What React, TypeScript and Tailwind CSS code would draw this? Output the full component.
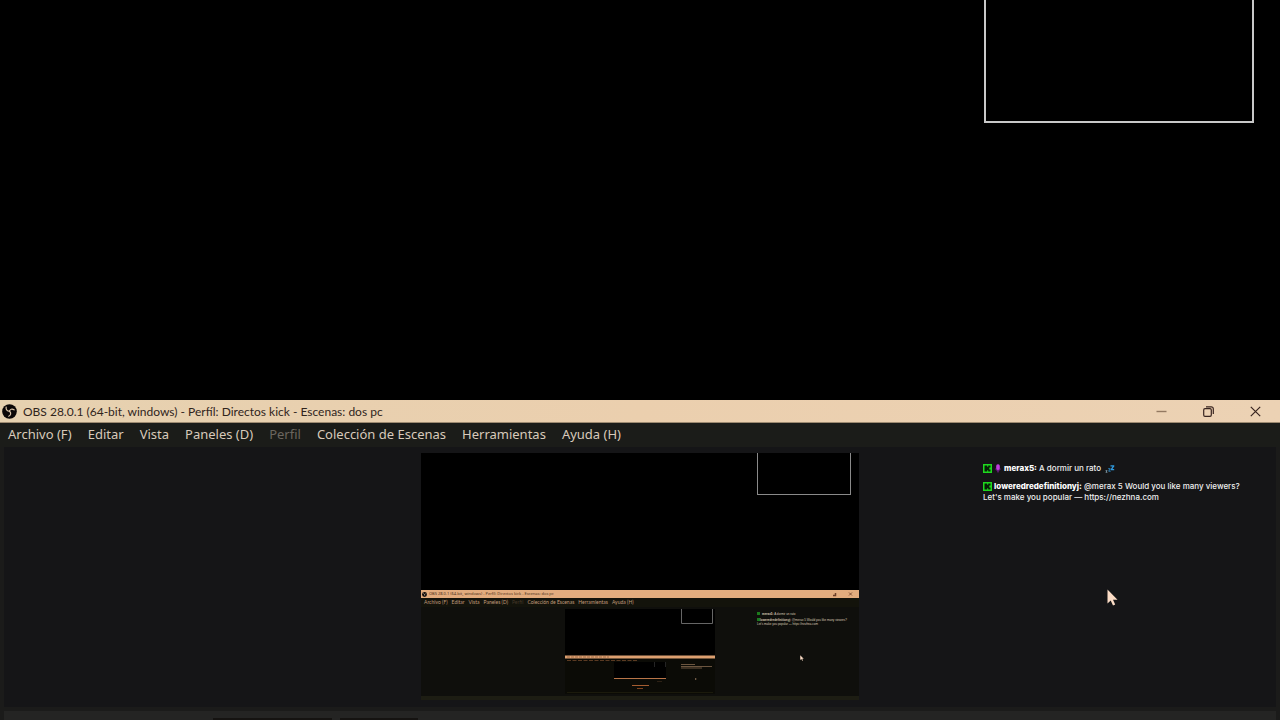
import type { ReactNode } from 'react'

const TITLE = 'OBS 28.0.1 (64-bit, windows) - Perfíl: Directos kick - Escenas: dos pc'

const MENU = [
  { label: 'Archivo (F)' },
  { label: 'Editar' },
  { label: 'Vista' },
  { label: 'Paneles (D)' },
  { label: 'Perfil', disabled: true },
  { label: 'Colección de Escenas' },
  { label: 'Herramientas' },
  { label: 'Ayuda (H)' },
]

function ObsLogo({ className }: { className: string }) {
  return (
    <svg viewBox="0 0 16 16" className={className} aria-hidden="true">
      <circle cx="8" cy="8" r="7.8" fill="#0b0707" />
      <g fill="none" stroke="#d9c3a8" strokeWidth="1.3" strokeLinecap="round">
        <path d="M4.4 3.2C4 6 5.6 7.6 8 7.7" />
        <path d="M12.9 6.2C10.6 4.6 8.5 5.6 8 7.7" />
        <path d="M7.2 13C9.6 12 10 9.6 8 7.7" />
      </g>
    </svg>
  )
}

function KickBadge() {
  return (
    <svg viewBox="0 0 9 9" className="mr-[2px] inline-block h-[9px] w-[9px] align-[-2px]" aria-label="Kick">
      <rect width="9" height="9" fill="#1fd81f" />
      <path d="M1.5 1.5h2.7v1.3h1v-1.3h2.3v2H6.3v2h1.200v2H5.2V6.200h-1v1.300H1.500z" fill="#062006" />
    </svg>
  )
}

function MicBadge() {
  return (
    <svg viewBox="0 0 6 9" className="mr-[3px] ml-px inline-block h-[9px] w-[6px] align-[-2px]" aria-hidden="true">
      <rect x="1.2" y="0.3" width="3.6" height="5.8" rx="1.7" fill="#c13be0" />
      <path d="M0.9 4.5c0 3 4.200 3 4.200 0M3 6.7V8.5" fill="none" stroke="#8a22a8" strokeWidth="0.9" />
    </svg>
  )
}

function SleepEmoji() {
  return (
    <svg viewBox="0 0 10 8" className="ml-1 inline-block h-2 w-[10px] align-[-2px]" aria-label="zzz">
      <g fill="none" strokeLinejoin="round">
        <path d="M5.5 0.9h3.3L6.2 4.6h3" stroke="#2f9be0" strokeWidth="1.3" />
        <path d="M3.2 3.7h2L3.7 6.2h2" stroke="#2b83bd" strokeWidth="1" />
        <path d="M0.6 5.6h1.5L0.9 7.3h1.5" stroke="#8ea9b8" strokeWidth="0.8" />
      </g>
    </svg>
  )
}

function Cursor({ className }: { className: string }) {
  return (
    <svg viewBox="0 0 11 17" className={className} aria-hidden="true">
      <path d="M0.5 0.5V14.5L3.7 11.5L6 16.5L8.2 15.5L6 10.7H10.5Z" fill="#fbdcc6" />
    </svg>
  )
}

function Chat() {
  return (
    <div className="font-['Inter',sans-serif] text-[8px] leading-[11px] font-medium text-[#efefef]">
      <p>
        <KickBadge />
        <MicBadge />
        <b className="font-extrabold text-white">merax5:</b> A dormir un rato
        <SleepEmoji />
      </p>
      <p className="mt-[7px]">
        <KickBadge />
        <b className="font-extrabold text-white">loweredredefinitionyj:</b> @merax 5 Would you like many viewers?
        <br />
        Let's make you popular — <a href="https://nezhna.com">https://nezhna.com</a>
      </p>
    </div>
  )
}

function TitleBar() {
  return (
    <header className="flex h-[23px] shrink-0 items-center border-b border-[#9d8a71] bg-gradient-to-r from-[#e6d1b0] via-[#ebcfae] to-[#ecd2b4] pr-px pl-[2px]">
      <ObsLogo className="h-[15px] w-[15px]" />
      <h1 className="ml-[6px] flex-1 pt-px font-['Lato',sans-serif] text-[12px] text-[#30241c]">{TITLE}</h1>
      <WindowButton label="Minimizar">
        <path d="M0.5 5.5h10" stroke="#937961" strokeWidth="1.4" />
      </WindowButton>
      <WindowButton label="Restaurar">
        <rect x="0.7" y="2.7" width="7.6" height="7.6" rx="1.3" />
        <path d="M3 0.8h5.3a2 2 0 0 1 2 2V8" />
      </WindowButton>
      <WindowButton label="Cerrar">
        <path d="M0.8 0.8l9.4 9.4M10.2 0.8L0.8 10.2" />
      </WindowButton>
    </header>
  )
}

function WindowButton({ label, children }: { label: string; children: ReactNode }) {
  return (
    <button aria-label={label} className="flex h-full w-[47px] items-center justify-center">
      <svg viewBox="0 0 11 11" className="h-[11px] w-[11px]" fill="none" stroke="#38241f" strokeWidth="1.2">
        {children}
      </svg>
    </button>
  )
}

function MenuBar() {
  return (
    <nav className="flex h-6 shrink-0 items-center gap-4 bg-[#1b1c19] pl-2 text-[13px] text-[#d8cabb]">
      {MENU.map((m) => (
        <button key={m.label} disabled={m.disabled} className="whitespace-nowrap disabled:text-[#6b665f]">
          {m.label}
        </button>
      ))}
    </nav>
  )
}

// the captures inside the capture, too small for anything but strokes
function DeepCapture() {
  return (
    <svg viewBox="0 0 150 85" className="h-[85px] w-[150px]" aria-hidden="true">
      <rect width="150" height="85" fill="#0b0b06" />
      <rect width="150" height="47" fill="#000" />
      <path d="M116.5 0v14.5h31V0" fill="none" stroke="#666" />
      <rect y="46.5" width="150" height="3" fill="#dc9f70" />
      <path d="M2 48h42" stroke="#a06c48" strokeWidth="1" strokeDasharray="3 1" />
      <path d="M2 51.5h70" stroke="#5a3a22" strokeWidth="1" strokeDasharray="4 1.5" />
      <rect x="49" y="53" width="52" height="16" fill="#000" />
      <path d="M89.5 53v5M100.5 53v5" stroke="#333" strokeWidth="0.7" />
      <path d="M49 69.5h52" stroke="#b87448" strokeWidth="1.2" />
      <path d="M116 55.5h14M116 57.5h31M116 59h21" stroke="#84684e" strokeWidth="0.8" />
      <circle cx="130.7" cy="70" r="0.7" fill="#bb9675" />
      <path d="M67 76.5h17" stroke="#a45c30" strokeWidth="1" />
      <path d="M72 79.5h6" stroke="#8d4a22" strokeWidth="0.9" />
      <path d="M92 72.5h5" stroke="#453020" strokeWidth="0.6" />
      <path d="M2 83.5h146" stroke="#1b1a0c" />
    </svg>
  )
}

function Preview() {
  return (
    <div className="flex h-[247px] flex-col bg-[#0f0f0c]">
      <div className="flex h-[137px] justify-end bg-black pr-2">
        <div className="h-[42px] w-[94px] border border-t-0 border-[#8a8a8a]" />
      </div>
      <div className="flex h-2 items-center bg-[#e2ac7e] pl-px">
        <ObsLogo className="h-[5px] w-[5px]" />
        <p className="ml-[2px] flex-1 text-[4px] leading-none text-[#4a2c18]">{TITLE}</p>
        <svg viewBox="0 0 30 8" className="h-2 w-[30px]" fill="none" stroke="#6b3f28" strokeWidth="0.8" aria-hidden="true">
          <path d="M4 5.5h2.5V3" strokeWidth="1.5" />
          <path d="M20 2.5l3 3M23 2.5l-3 3" />
        </svg>
      </div>
      <div className="flex h-[9px] items-center gap-1 bg-[#13130b] pl-[3px] font-['Lato',sans-serif] text-[5px] leading-none text-[#c29d7c]">
        {MENU.map((m) => (
          <span key={m.label} className={m.disabled ? 'whitespace-nowrap text-[#443729]' : 'whitespace-nowrap'}>
            {m.label}
          </span>
        ))}
      </div>
      <div className="mx-px grid flex-1 grid-cols-[1fr_150px_1fr] pt-[2px]">
        <div />
        <DeepCapture />
        <div className="relative pt-[3px] pl-[42px] font-['Liberation_Sans',sans-serif] text-[3px] leading-[4px] whitespace-nowrap text-[#d8c8b4]">
          <p>
            <span className="mr-[2px] inline-block h-[3px] w-[3px] bg-[#1c7a1c]" />
            <b>merax5:</b> A dormir un rato
          </p>
          <p className="mt-[2px]">
            <span className="inline-block h-[3px] w-[3px] bg-[#1c7a1c]" />
            <b>loweredredefinitionyj:</b> @merax 5 Would you like many viewers?
            <br />
            Let's make you popular — https://nezhna.com
          </p>
          <Cursor className="absolute top-[46px] left-[85px] h-[6px] w-[4px]" />
        </div>
      </div>
      <div className="h-1 bg-[#1d1d13]" />
    </div>
  )
}

export default function App() {
  return (
    <div className="flex h-screen flex-col overflow-hidden bg-[#1b1b1a] font-['Noto_Sans',sans-serif]">
      <div className="flex h-[400px] shrink-0 justify-end bg-black pr-[26px]">
        <div className="h-[123px] w-[270px] border-2 border-t-0 border-[#c8c8c8]" />
      </div>
      <TitleBar />
      <MenuBar />
      <main className="relative mx-1 grid shrink-0 grid-cols-[1fr_438px_1fr] bg-[#151517] pt-[6px] pb-[7px]">
        <div />
        <Preview />
        <div className="flex justify-end pt-[10px]">
          <div className="w-[293px]">
            <Chat />
          </div>
        </div>
        <Cursor className="absolute top-[142px] right-[158px] h-[17px] w-[11px]" />
      </main>
      <footer className="mx-1 mt-1 flex flex-1 gap-2 bg-[#242423] pt-[7px] pl-[209px]">
        <div className="w-[119px] bg-[#151311]" />
        <div className="w-[78px] bg-[#151311]" />
      </footer>
    </div>
  )
}
